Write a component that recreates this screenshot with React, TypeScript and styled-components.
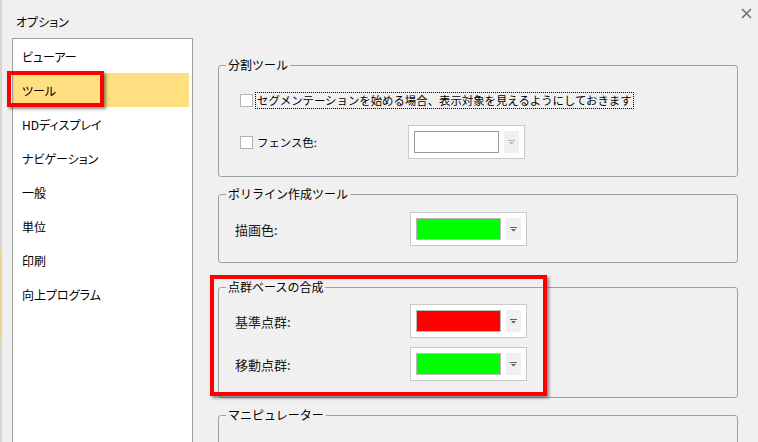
import React from 'react';
import styled, { createGlobalStyle } from 'styled-components';

// Options dialog: left category list, right side group boxes with colour pickers

const GlobalStyle = createGlobalStyle`
  html, body {
    margin: 0;
    padding: 0;
  }
  body {
    background: #f0f0f0;
    font-family: "Noto Sans CJK JP", "Noto Sans", sans-serif;
    color: #000;
  }
`;

const Screen = styled.div`
  display: flex;
  width: 758px;
  height: 442px;
  overflow: hidden;
`;

// strip of the window lying behind the dialog
const BackWindow = styled.div`
  width: 2px;
  flex-shrink: 0;
  background: linear-gradient(
    to bottom,
    #d9d5cb 0,
    #d9d5cb 250px,
    #ecd594 250px,
    #ecd594 340px,
    #d9d5cb 340px
  );
`;

const Dialog = styled.div`
  flex: 1;
  display: flex;
  flex-direction: column;
  background: #f0f0f0;
  min-width: 0;
`;

const Header = styled.div`
  height: 38px;
  flex-shrink: 0;
  display: flex;
  justify-content: space-between;
  align-items: flex-start;
`;

const Title = styled.div`
  padding: 13px 0 0 14px;
  font-size: 12px;
  line-height: 18px;
  font-feature-settings: "palt";
`;

const CloseButton = styled.div`
  padding: 8px 6px 0 0;
  line-height: 0;
`;

const Body = styled.div`
  flex: 1;
  display: flex;
  padding-left: 10px;
  min-height: 0;
`;

const CategoryList = styled.div`
  width: 181px;
  height: 420px;
  flex-shrink: 0;
  box-sizing: border-box;
  background: #fff;
  border: 1px solid #a0a0a0;
  border-bottom: none;
`;

const CategoryItem = styled.div<{ $selected?: boolean }>`
  position: relative;
  height: 34px;
  display: flex;
  align-items: center;
  padding-left: 8px;
  margin-right: 3px;
  font-size: 12px;
  font-feature-settings: "palt";
  background: ${(p) => (p.$selected ? '#ffdf80' : 'transparent')};
  border-left: 1px solid ${(p) => (p.$selected ? '#d6cdb0' : 'transparent')};
`;

const Content = styled.div`
  flex: 1;
  padding: 20px 20px 0 25px;
  min-width: 0;
`;

const Group = styled.fieldset<{ $gap: number; $pt: number; $pb: number }>`
  margin: ${(p) => p.$gap}px 0 0;
  padding: ${(p) => p.$pt}px 0 ${(p) => p.$pb}px 7px;
  border: 1px solid #a0a0a0;
  border-radius: 3px;
  min-width: 0;
  min-height: ${(p) => (p.$pb === 0 ? '40px' : '0')};
`;

const Legend = styled.legend`
  padding: 0 2px;
  font-size: 12px;
  line-height: 14px;
`;

const Rows = styled.div<{ $indent: number; $gap: number }>`
  display: flex;
  flex-direction: column;
  gap: ${(p) => p.$gap}px;
  padding-left: ${(p) => p.$indent}px;
`;

const Row = styled.div<{ $height?: number }>`
  display: flex;
  align-items: center;
  height: ${(p) => (p.$height ? `${p.$height}px` : 'auto')};
`;

const CheckBox = styled.span`
  width: 13px;
  height: 13px;
  box-sizing: border-box;
  flex-shrink: 0;
  background: #fff;
  border: 1px solid #b4b4b4;
  margin-right: 3px;
`;

const CheckLabel = styled.span<{ $focused?: boolean; $width?: number }>`
  font-size: 11.4px;
  line-height: 13px;
  padding: 1px 1px;
  white-space: nowrap;
  outline: ${(p) => (p.$focused ? '1px dotted #000' : 'none')};
  width: ${(p) => (p.$width ? `${p.$width}px` : 'auto')};
  flex-shrink: 0;
`;

const FieldLabel = styled.span`
  width: 175px;
  flex-shrink: 0;
  font-size: 13px;
  color: #1a1a1a;
`;

const Picker = styled.div`
  display: flex;
  gap: 5px;
  padding: 5px;
  background: #fff;
  border: 1px solid #cacaca;
`;

const Swatch = styled.div<{ $color: string; $disabled?: boolean }>`
  width: 85px;
  height: 22px;
  box-sizing: border-box;
  background: ${(p) => p.$color};
  border: 1px solid ${(p) => (p.$disabled ? '#9a9a9a' : '#b8b8b8')};
`;

const DropButton = styled.div`
  width: 15px;
  height: 22px;
  background: #f0f0f0;
  display: flex;
  align-items: center;
  justify-content: center;
`;

const Marked = styled.div<{ $gap: number }>`
  position: relative;
  margin-top: ${(p) => p.$gap}px;
`;

// red annotation frames drawn over the screenshot
const Annotation = styled.div<{ $left: number; $top: number; $w: number; $h: number }>`
  position: absolute;
  left: ${(p) => p.$left}px;
  top: ${(p) => p.$top}px;
  width: ${(p) => p.$w}px;
  height: ${(p) => p.$h}px;
  box-sizing: border-box;
  border: 4px solid #ff0000;
  box-shadow: 2px 2px 3px rgba(0, 0, 0, 0.45);
  pointer-events: none;
`;

const CloseIcon: React.FC = () => (
  <svg width="11" height="11" viewBox="0 0 11 11">
    <path d="M1 1L10 10M10 1L1 10" stroke="#6e6e6e" strokeWidth="1.6" />
  </svg>
);

const ArrowIcon: React.FC<{ disabled?: boolean }> = ({ disabled }) => (
  <svg width="7" height="5" viewBox="0 0 7 5">
    <path d="M0 0h7v1H0z M1 2h5L3.5 4.5z" fill={disabled ? '#b4b4b4' : '#606060'} />
  </svg>
);

const ColorPicker: React.FC<{ color: string; disabled?: boolean }> = ({ color, disabled }) => (
  <Picker>
    <Swatch $color={color} $disabled={disabled} />
    <DropButton>
      <ArrowIcon disabled={disabled} />
    </DropButton>
  </Picker>
);

const categories = [
  'ビューアー',
  'ツール',
  'HDディスプレイ',
  'ナビゲーション',
  '一般',
  '単位',
  '印刷',
  '向上プログラム',
];

const App: React.FC = () => {
  return (
    <Screen>
      <GlobalStyle />
      <BackWindow />
      <Dialog>
        <Header>
          <Title>オプション</Title>
          <CloseButton>
            <CloseIcon />
          </CloseButton>
        </Header>
        <Body>
          <CategoryList>
            {categories.map((name) => (
              <CategoryItem key={name} $selected={name === 'ツール'}>
                {name}
                {name === 'ツール' && <Annotation $left={-7} $top={-2} $w={97} $h={36} />}
              </CategoryItem>
            ))}
          </CategoryList>

          <Content>
            <Group $gap={0} $pt={18} $pb={17}>
              <Legend>分割ツール</Legend>
              <Rows $indent={14} $gap={15}>
                <Row $height={20}>
                  <CheckBox />
                  <CheckLabel $focused>
                    セグメンテーションを始める場合、表示対象を見えるようにしておきます
                  </CheckLabel>
                </Row>
                <Row>
                  <CheckBox />
                  <CheckLabel $width={150}>フェンス色:</CheckLabel>
                  <ColorPicker color="#ffffff" disabled />
                </Row>
              </Rows>
            </Group>

            <Group $gap={10} $pt={11} $pb={16}>
              <Legend>ポリライン作成ツール</Legend>
              <Rows $indent={9} $gap={9}>
                <Row>
                  <FieldLabel>描画色:</FieldLabel>
                  <ColorPicker color="#00ff00" />
                </Row>
              </Rows>
            </Group>

            <Marked $gap={17}>
              <Group $gap={0} $pt={10} $pb={16}>
                <Legend>点群ベースの合成</Legend>
                <Rows $indent={9} $gap={9}>
                  <Row>
                    <FieldLabel>基準点群:</FieldLabel>
                    <ColorPicker color="#ff0000" />
                  </Row>
                  <Row>
                    <FieldLabel>移動点群:</FieldLabel>
                    <ColorPicker color="#00ff00" />
                  </Row>
                </Rows>
              </Group>
              <Annotation $left={-8} $top={-5} $w={337} $h={121} />
            </Marked>

            <Group $gap={10} $pt={10} $pb={0}>
              <Legend>マニピュレーター</Legend>
            </Group>
          </Content>
        </Body>
      </Dialog>
    </Screen>
  );
};

export default App;
